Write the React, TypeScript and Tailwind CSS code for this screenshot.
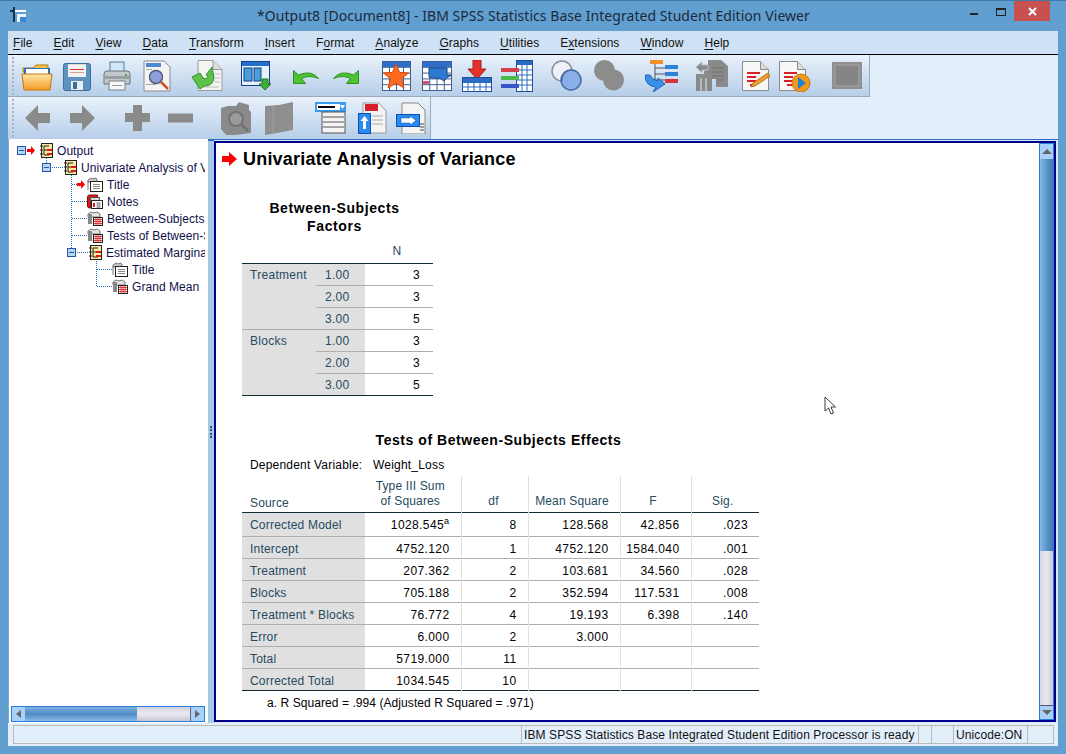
import type { ReactNode } from "react";

type IcProps = { w: number; h?: number; className?: string; children?: ReactNode };

function Ic({ w, h = 32, className, children }: IcProps) {
  return (
    <svg width={w} height={h} viewBox={`0 0 ${w} ${h}`} className={`shrink-0 ${className ?? ""}`}>
      {children}
    </svg>
  );
}

type P = { className?: string };

const Folder = ({ className }: P) => (
  <Ic w={32} className={className}>
    <defs>
      <linearGradient id="fo" x1="0" y1="0" x2="0" y2="1">
        <stop offset="0" stopColor="#ffe7a8" />
        <stop offset="1" stopColor="#f59a22" />
      </linearGradient>
    </defs>
    <path d="M2 8h10l3-3h12v7H2z" fill="#f4c542" stroke="#b57a10" />
    <rect x="3" y="8" width="26" height="6" fill="#2f6fc0" />
    <rect x="5" y="9" width="22" height="6" fill="#fff" />
    <path d="M1 14h30l-2 16H3z" fill="url(#fo)" stroke="#c8740c" />
  </Ic>
);

const Floppy = ({ className }: P) => (
  <Ic w={28} className={className}>
    <rect x="0.5" y="3.5" width="27" height="27" rx="2" fill="#5f93bf" stroke="#3d6f9c" />
    <rect x="5" y="4" width="18" height="13" fill="#f2f2f2" />
    <rect x="5" y="4" width="18" height="1" fill="#d9d9d9" />
    <rect x="7" y="9" width="14" height="1" fill="#d33" />
    <rect x="7" y="12" width="14" height="1" fill="#d8a0a0" />
    <rect x="8" y="21" width="12" height="9" fill="#e8eef5" />
    <rect x="10" y="22" width="4" height="7" fill="#3d6f9c" />
  </Ic>
);

const Printer = ({ className }: P) => (
  <Ic w={28} className={className}>
    <rect x="7" y="2" width="14" height="11" fill="#cfe6fb" stroke="#5d7ea0" />
    <path d="M1 14q0-3 3-3h20q3 0 3 3v10H1z" fill="#c4c8cd" stroke="#6b7178" />
    <rect x="1.5" y="16" width="25" height="3" fill="#9a9fa5" />
    <rect x="22" y="14" width="2" height="2" fill="#3fb24f" />
    <rect x="6" y="21" width="16" height="9" fill="#f6f6f6" stroke="#7b8086" />
    <rect x="9" y="25" width="10" height="1" fill="#999" />
  </Ic>
);

const Preview = ({ className }: P) => (
  <Ic w={29} className={className}>
    <path d="M1 1h20l6 6v24H1z" fill="#f4f4f4" stroke="#8c8c8c" />
    <rect x="3" y="3" width="15" height="4" fill="#4c8ad0" />
    <rect x="3" y="9" width="6" height="1" fill="#aaa" />
    <rect x="3" y="24" width="10" height="1" fill="#aaa" />
    <circle cx="13" cy="17" r="6.5" fill="#8e9fdd" stroke="#555e7a" strokeWidth="1.5" />
    <path d="M18 22l7 7" stroke="#d0522a" strokeWidth="2.5" />
  </Ic>
);

const GreenDoc = ({ className }: P) => (
  <Ic w={32} className={className}>
    <path d="M7 0.5h15l9 9v21H7z" fill="#f4f4f4" stroke="#999" />
    <path d="M22 0.5v9h9" fill="#ddd" stroke="#999" />
    <path d="M24 14h5M24 18h5M24 22h5M12 27h16" stroke="#bbb" />
    <path d="M1 17l8-4 3 5q4 2 5-2l-2-1 6-8 2 11q-1 8-10 8l-4 3z" fill="#5cc24a" stroke="#2e8f2b" />
  </Ic>
);

const WinDown = ({ className }: P) => (
  <Ic w={30} className={className}>
    <rect x="0.5" y="1.5" width="28" height="24" fill="#e8f0f8" stroke="#123e88" />
    <rect x="1" y="2" width="27" height="4" fill="#2470cc" />
    <rect x="3" y="8" width="8" height="13" fill="#48a0d8" stroke="#123e88" />
    <rect x="13" y="8" width="7" height="13" fill="#48a0d8" stroke="#123e88" />
    <path d="M21 19h6v5h3l-6 6-6-6h3z" fill="#3fae3f" stroke="#1f7a1f" />
  </Ic>
);

const Undo = ({ className }: P) => (
  <Ic w={26} className={className}>
    <path d="M0.500 10.500v13h12l-4-5q8-4 17 0q-7-9-20-3.500z" fill="#4dc431" stroke="#2f8f1f" strokeLinejoin="round" />
  </Ic>
);

const Redo = ({ className }: P) => (
  <Ic w={26} className={className}>
    <path d="M25.500 10.500v13h-12l4-5q-8-4-17 0q7-9 20-3.500z" fill="#4dc431" stroke="#2f8f1f" strokeLinejoin="round" />
  </Ic>
);

const Grid = ({ x, y, w, h, cols, rows, color = "#3f5f8f" }: { x: number; y: number; w: number; h: number; cols: number; rows: number; color?: string }) => (
  <g stroke={color} fill="none">
    <rect x={x + 0.5} y={y + 0.5} width={w} height={h} fill="#fff" />
    {Array.from({ length: cols - 1 }, (_, i) => (
      <path key={i} d={`M${x + 0.5 + ((i + 1) * w) / cols} ${y}v${h}`} />
    ))}
    {Array.from({ length: rows - 1 }, (_, i) => (
      <path key={i} d={`M${x} ${y + 0.5 + ((i + 1) * h) / rows}h${w}`} />
    ))}
  </g>
);

const StarTable = ({ className }: P) => (
  <Ic w={29} className={className}>
    <Grid x={0} y={1} w={28} h={29} cols={4} rows={5} />
    <rect x="1" y="2" width="27" height="5" fill="#2e6ec8" />
    <path d="M14 4l3.6 8.4 9 .6-7 5.6 2.4 9.4L14 23l-8 5 2.4-9.4-7-5.6 9-.6z" fill="#ff6a1f" stroke="#d8480c" />
  </Ic>
);

const CaseTable = ({ className }: P) => (
  <Ic w={30} className={className}>
    <Grid x={0} y={1} w={29} h={29} cols={4} rows={5} />
    <rect x="1" y="2" width="28" height="5" fill="#2e6ec8" />
    <path d="M7 8h18v7l5 0q-6 2-8 6-4-4-8-3-4 1-7-1z" fill="#2e7ad0" stroke="#14458c" />
    <rect x="1" y="21" width="6" height="3" fill="#e0506a" />
  </Ic>
);

const InsertCases = ({ className }: P) => (
  <Ic w={30} className={className}>
    <path d="M11 0h8v9h5L15 19 6 9h5z" fill="#e2322a" stroke="#a81d18" />
    <rect x="0.5" y="17.5" width="29" height="14" fill="#fff" stroke="#1d4f9c" />
    <rect x="1" y="18" width="28" height="5" fill="#2a6bc4" />
    <path d="M1 27h28M6 23v9M12 23v9M18 23v9M24 23v9" stroke="#2a6bc4" />
  </Ic>
);

const Vars = ({ className }: P) => (
  <Ic w={32} className={className}>
    <rect x="15.5" y="0.5" width="16" height="31" fill="#fff" stroke="#1d4f9c" />
    <rect x="16" y="1" width="15" height="4" fill="#2a6bc4" />
    <path d="M16 10h15M16 15h15M16 20h15M16 25h15M21 5v26M26 5v26" stroke="#2a6bc4" />
    <rect x="0" y="8" width="18" height="4" fill="#d8404a" />
    <rect x="0" y="16" width="18" height="4" fill="#4cb84a" />
    <rect x="0" y="24" width="18" height="4" fill="#3a54c8" />
  </Ic>
);

const Venn = ({ className }: P) => (
  <Ic w={31} className={className}>
    <circle cx="11" cy="11" r="10" fill="#eef2f8" stroke="#8a8f98" strokeWidth="1.5" />
    <circle cx="20" cy="20" r="10" fill="#8aaee8" stroke="#4a6aa0" strokeWidth="1.5" />
    <path d="M11 21a10 10 0 0 1 9-11" fill="none" stroke="#4a6aa0" />
  </Ic>
);

const VennGray = ({ className }: P) => (
  <Ic w={30} className={className}>
    <circle cx="10.5" cy="10.5" r="10.5" fill="#8c8c8c" />
    <circle cx="19.5" cy="20" r="10.5" fill="#8c8c8c" />
  </Ic>
);

const TreeTool = ({ className }: P) => (
  <Ic w={33} className={className}>
    <rect x="5" y="0" width="13" height="4" fill="#f0902a" />
    <path d="M10 4v20M10 8h10M10 14h10M10 20h10" stroke="#555" fill="none" />
    <rect x="20" y="5" width="13" height="4" fill="#2e82d8" />
    <rect x="20" y="12" width="13" height="4" fill="#2e82d8" />
    <rect x="20" y="19" width="13" height="4" fill="#d8323a" />
    <path d="M0 15q0 11 11 12l-3 5 12-8-7-6 0 3q-6-1-8-6z" fill="#3a92e8" stroke="#1e62b0" />
  </Ic>
);

const GrayPivot = ({ className }: P) => (
  <Ic w={32} className={className}>
    <path d="M12 0h13l7 6v21H20v-8H8v-8l4-2z" fill="#8a8a8a" />
    <path d="M16 8h12M16 12h12M16 16h12M22 20h6" stroke="#6f6f6f" />
    <path d="M0 14h16v17H0z" fill="#8a8a8a" />
    <path d="M5 18v13M10 18v13" stroke="#bdcbd9" strokeWidth="1.5" />
    <path d="M0 7l6-5v3h6v5H6v3z" fill="#8a8a8a" stroke="#b0bdc9" />
  </Ic>
);

const PenDoc = ({ className }: P) => (
  <Ic w={28} className={className}>
    <path d="M0.5 1.5h18l8 8v21h-26z" fill="#f7f7f7" stroke="#8c8c8c" />
    <path d="M18.5 1.5v8h8" fill="#dcdcdc" stroke="#8c8c8c" />
    <path d="M5 13h13M5 17h9M5 21h9M8 25h5" stroke="#d8202a" strokeWidth="2" />
    <path d="M11 23l15-10 2 3-15 10-4 1z" fill="#f0a030" stroke="#b87010" />
  </Ic>
);

const PlayDoc = ({ className }: P) => (
  <Ic w={32} className={className}>
    <path d="M0.5 1.5h18l8 8v21h-26z" fill="#f7f7f7" stroke="#8c8c8c" />
    <path d="M18.5 1.5v8h8" fill="#dcdcdc" stroke="#8c8c8c" />
    <path d="M5 13h13M5 17h9M5 21h9M8 25h5" stroke="#d8202a" strokeWidth="2" />
    <circle cx="22" cy="23" r="9" fill="#f09a1c" stroke="#c87410" />
    <path d="M19 17l8 6-8 6z" fill="#1e7ed8" />
  </Ic>
);

const GrayRect = ({ className }: P) => (
  <Ic w={30} h={27} className={className}>
    <rect width="30" height="27" fill="#8f8f8f" />
    <rect x="3" y="3" width="24" height="21" fill="#858585" stroke="#a5a5a5" />
  </Ic>
);

const BackArrow = ({ className }: P) => (
  <Ic w={25} h={26} className={className}>
    <path d="M0 13L13 0v8h12v10H13v8z" fill="#8a8a8a" />
  </Ic>
);

const FwdArrow = ({ className }: P) => (
  <Ic w={25} h={26} className={className}>
    <path d="M25 13L12 0v8H0v10h12v8z" fill="#8a8a8a" />
  </Ic>
);

const Plus = ({ className }: P) => (
  <Ic w={25} h={26} className={className}>
    <path d="M8 0h9v8h8v9h-8v9H8v-9H0V8h8z" fill="#8a8a8a" />
  </Ic>
);

const Minus = ({ className }: P) => (
  <Ic w={25} h={26} className={className}>
    <rect y="8.5" width="25" height="9" fill="#8a8a8a" />
  </Ic>
);

const GrayBookSearch = ({ className }: P) => (
  <Ic w={30} h={33} className={className}>
    <path d="M0 6l7-2 8 0 3-4 10 3v5l2 2v21l-24 3L0 27z" fill="#8a8a8a" />
    <circle cx="15" cy="17" r="7" fill="#9a9a9a" stroke="#737373" strokeWidth="2" />
    <path d="M20 22l7 7" stroke="#737373" strokeWidth="2.5" />
  </Ic>
);

const GrayBook = ({ className }: P) => (
  <Ic w={28} h={33} className={className}>
    <path d="M0 4l14-1 14-3v28L12 31 0 33z" fill="#8f8f8f" />
    <path d="M8 4v28" stroke="#9f9f9f" />
  </Ic>
);

const ListTool = ({ className }: P) => (
  <Ic w={31} className={className}>
    <rect x="0" y="0" width="31" height="10" fill="#3a9af0" />
    <rect x="2" y="2" width="23" height="6" fill="#fff" />
    <rect x="3" y="4" width="17" height="2" fill="#000" />
    <path d="M25 3h5l-2.5 4z" fill="#fff" />
    <rect x="7" y="10" width="23" height="21" fill="#f4f4f4" stroke="#555" />
    <path d="M8 15h21M8 20h21M8 25h21" stroke="#555" />
  </Ic>
);

const DocUp = ({ className }: P) => (
  <Ic w={29} className={className}>
    <path d="M5 1h16l7 8v22H5z" fill="#f4f4f4" stroke="#999" />
    <rect x="7" y="2" width="13" height="7" fill="#d8202a" />
    <path d="M14 14h11M14 18h11M14 22h11" stroke="#aaa" />
    <rect x="0.5" y="11.5" width="12" height="20" fill="#2a8af0" stroke="#1050b0" />
    <path d="M6.5 14l4 5H8v8H5v-8H2.5z" fill="#fff" />
  </Ic>
);

const DocRight = ({ className }: P) => (
  <Ic w={30} className={className}>
    <path d="M6 1h16l7 7v24H6z" fill="#f4f4f4" stroke="#888" />
    <path d="M24 22h4M24 25h4M24 28h4" stroke="#444" />
    <rect x="0.5" y="12.5" width="23" height="12" fill="#2a8af0" stroke="#1050b0" />
    <path d="M5 16h9v-2l6 4.500-6 4.500v-2H5z" fill="#fff" stroke="#1050b0" strokeWidth="0.5" />
  </Ic>
);

const TreeBox = ({ className }: P) => (
  <Ic w={9} h={9} className={className}>
    <rect x="0.5" y="0.500" width="8" height="8" fill="#b8d4f0" stroke="#1f58a8" />
    <path d="M2 4.500h5" stroke="#1f58a8" />
  </Ic>
);

const RedArrow = ({ className }: P) => (
  <Ic w={8} h={9} className={className}>
    <path d="M0 3h4V0l4 4.500L4 9V6H0z" fill="#f00" />
  </Ic>
);

const HeadIcon = ({ className }: P) => (
  <Ic w={13} h={15} className={className}>
    <rect x="1.500" y="0.500" width="11" height="14" fill="#f8e8a0" stroke="#222" />
    <path d="M0 3h3M0 7h3M0 11h3" stroke="#222" />
    <path d="M4 3h5M4 3v9M4 7h4M4 12h5" stroke="#222" />
    <rect x="7" y="6" width="5" height="2" fill="#e01818" />
    <rect x="7" y="10" width="5" height="2" fill="#e01818" />
  </Ic>
);

const TextBook = ({ className }: P) => (
  <Ic w={16} h={15} className={className}>
    <path d="M1 3l3-2 2 1 2-1 2 1v3H1z" fill="#c8c8c8" stroke="#777" />
    <path d="M1 4v9" stroke="#777" />
    <rect x="3.500" y="4.500" width="12" height="10" fill="#fff" stroke="#222" />
    <path d="M6 7.500h7M6 9.500h7M6 11.500h7" stroke="#888" />
  </Ic>
);

const TableBook = ({ className }: P) => (
  <Ic w={16} h={15} className={className}>
    <path d="M1 3l3-2 3 1 3-1 3 2v3H1z" fill="#e4e4e4" stroke="#777" />
    <rect x="1" y="3" width="4" height="10" fill="#888" />
    <rect x="6.500" y="6.500" width="9" height="8" fill="#fff" stroke="#222" />
    <path d="M7 8.500h8M7 10.500h8M7 12.500h8M9 7v7M11 7v7M13 7v7" stroke="#d81818" strokeWidth="0.8" />
  </Ic>
);

const NotesBook = ({ className }: P) => (
  <Ic w={16} h={15} className={className}>
    <path d="M0.500 3q0-2 2-2h8v5h-7v8h-1q-2 0-2-2z" fill="#d81818" stroke="#801010" />
    <rect x="3.500" y="3.500" width="9" height="4" fill="#d8d8d8" stroke="#555" />
    <rect x="4.500" y="6.500" width="11" height="8" fill="#fff" stroke="#222" />
    <rect x="6" y="9" width="2" height="4" fill="#d81818" />
    <path d="M9.500 9h4M9.500 11h4M9.500 13h4" stroke="#555" />
  </Ic>
);

const MENU: [string, string, string][] = [
  ["", "F", "ile"],
  ["", "E", "dit"],
  ["", "V", "iew"],
  ["", "D", "ata"],
  ["", "T", "ransform"],
  ["", "I", "nsert"],
  ["F", "o", "rmat"],
  ["", "A", "nalyze"],
  ["", "G", "raphs"],
  ["", "U", "tilities"],
  ["E", "x", "tensions"],
  ["", "W", "indow"],
  ["", "H", "elp"],
];

const FACTORS = [
  { name: "Treatment", rows: [["1.00", "3"], ["2.00", "3"], ["3.00", "5"]] },
  { name: "Blocks", rows: [["1.00", "3"], ["2.00", "3"], ["3.00", "5"]] },
];

const EFFECTS = [
  ["Corrected Model", "1028.545", "8", "128.568", "42.856", ".023"],
  ["Intercept", "4752.120", "1", "4752.120", "1584.040", ".001"],
  ["Treatment", "207.362", "2", "103.681", "34.560", ".028"],
  ["Blocks", "705.188", "2", "352.594", "117.531", ".008"],
  ["Treatment * Blocks", "76.772", "4", "19.193", "6.398", ".140"],
  ["Error", "6.000", "2", "3.000", "", ""],
  ["Total", "5719.000", "11", "", "", ""],
  ["Corrected Total", "1034.545", "10", "", "", ""],
];

function TreeRow({ className, children, label }: { className: string; children: ReactNode; label: string }) {
  return (
    <div className={`flex h-[17px] items-center whitespace-nowrap text-[12px] text-[#10104a] ${className}`}>
      {children}
      <span className="ml-[4px] tracking-[0.05px]">{label}</span>
    </div>
  );
}

function TreePane() {
  return (
    <div className="relative flex w-[200px] shrink-0 flex-col overflow-hidden border-l border-[#7fa9d0] bg-white">
      <svg width="198" height="170" className="absolute left-0 top-0" fill="none" stroke="#2a6cc0" strokeDasharray="1 1">
        <path d="M37.500 17v7M41 28.500h14M62.500 34v76M63 45.500h6M63 62.500h15M63 79.500h15M63 96.500h15M66 113.500h14M87.500 120v28M88 130.500h15M88 147.500h15" />
      </svg>
      <div className="relative w-[196px] flex-1 overflow-hidden pt-[3px]">
        <TreeRow className="pl-[8px]" label="Output">
          <TreeBox />
          <RedArrow className="ml-[1px]" />
          <HeadIcon className="ml-[5px]" />
        </TreeRow>
        <TreeRow className="pl-[33px]" label="Univariate Analysis of Variance">
          <TreeBox />
          <HeadIcon className="ml-[13px]" />
        </TreeRow>
        <TreeRow className="pl-[68px]" label="Title">
          <RedArrow />
          <TextBook className="ml-[2px]" />
        </TreeRow>
        <TreeRow className="pl-[78px]" label="Notes">
          <NotesBook />
        </TreeRow>
        <TreeRow className="pl-[78px]" label="Between-Subjects Factors">
          <TableBook />
        </TreeRow>
        <TreeRow className="pl-[78px]" label="Tests of Between-Subjects Effects">
          <TableBook />
        </TreeRow>
        <TreeRow className="pl-[58px]" label="Estimated Marginal Means">
          <TreeBox />
          <HeadIcon className="ml-[13px]" />
        </TreeRow>
        <TreeRow className="pl-[103px]" label="Title">
          <TextBook />
        </TreeRow>
        <TreeRow className="pl-[103px]" label="Grand Mean">
          <TableBook />
        </TreeRow>
      </div>
      <div className="mx-[2px] mb-[1px] flex h-[16px] w-[194px] border border-[#2a80d8]">
        <div className="flex w-[13px] items-center justify-center bg-[#a8d0f8]">
          <div className="h-0 w-0 border-y-[4px] border-r-[5px] border-y-transparent border-r-[#666]" />
        </div>
        <div className="w-[112px] bg-gradient-to-b from-[#7fb0e0] via-[#4f8cc4] to-[#8ab8e6]" />
        <div className="flex-1 bg-gradient-to-b from-[#d4d2e0] via-[#ebe9f0] to-[#c8c6d4]" />
        <div className="flex w-[14px] items-center justify-center border-l border-[#668] bg-[#a8d0f8]">
          <div className="h-0 w-0 border-y-[4px] border-l-[5px] border-y-transparent border-l-[#666]" />
        </div>
      </div>
    </div>
  );
}

function FactorsTable() {
  return (
    <table className="w-[191px] table-fixed border-collapse border-b border-[#152935] text-[12px] tracking-[0.3px]">
      <colgroup>
        <col className="w-[74px]" />
        <col className="w-[49px]" />
        <col className="w-[68px]" />
      </colgroup>
      <thead>
        <tr className="h-[22px] border-b border-[#152935] text-[#264a60]">
          <th colSpan={2} />
          <th className="pb-[1px] pr-[4px] text-center font-normal">N</th>
        </tr>
      </thead>
      {FACTORS.map((g, gi) => (
        <tbody key={g.name} className={gi > 0 ? "border-t border-[#aeaeae]" : ""}>
          {g.rows.map((r, i) => (
            <tr key={i} className={`h-[22px] ${i > 0 ? "border-t border-[#aeaeae]" : ""}`}>
              {i === 0 && (
                <td rowSpan={3} className="bg-[#e0e0e0] pl-[8px] pt-[2px] align-top text-[#264a60]">
                  {g.name}
                </td>
              )}
              <td className="bg-[#e0e0e0] pl-[9px] pt-[1px] text-[#264a60]">{r[0]}</td>
              <td className="pr-[13px] pt-[1px] text-right text-[#010205]">{r[1]}</td>
            </tr>
          ))}
        </tbody>
      ))}
    </table>
  );
}

function EffectsTable() {
  return (
    <table className="w-[517px] table-fixed border-collapse border-b border-[#152935] text-[12px]">
      <colgroup>
        <col className="w-[123px]" />
        <col className="w-[96px]" />
        <col className="w-[67px]" />
        <col className="w-[92px]" />
        <col className="w-[71px]" />
        <col className="w-[68px]" />
      </colgroup>
      <thead>
        <tr className="h-[37px] border-b border-[#152935] tracking-[0.15px] text-[#264a60] [&>th]:align-bottom [&>th]:font-normal [&>th]:leading-[15px]">
          <th className="pb-[1px] pl-[8px] text-left">Source</th>
          <th className="pb-[3px] pr-[5px] text-center">
            Type III Sum
            <br />
            of Squares
          </th>
          <th className="border-l border-[#e0e0e0] pb-[3px] pr-[2px] text-center">df</th>
          <th className="border-l border-[#e0e0e0] pb-[3px] pr-[4px] text-center">Mean Square</th>
          <th className="border-l border-[#e0e0e0] pb-[3px] pr-[5px] text-center">F</th>
          <th className="border-l border-[#e0e0e0] pb-[3px] pr-[5px] text-center">Sig.</th>
        </tr>
      </thead>
      <tbody>
        {EFFECTS.map((r, i) => (
          <tr key={r[0]} className={i === 0 ? "h-[24px]" : "h-[22px] border-t border-[#aeaeae]"}>
            <td className={`whitespace-nowrap bg-[#e0e0e0] pl-[8px] tracking-[0.2px] text-[#264a60] ${i > 0 ? "pt-[2px]" : ""}`}>{r[0]}</td>
            {r.slice(1).map((v, j) => (
              <td key={j} className={`pr-[11px] text-right tracking-[0.4px] text-[#010205] ${i > 0 ? "pt-[2px]" : ""} ${j > 0 ? "border-l border-[#e0e0e0]" : ""}`}>
                {v}
                {i === 0 && j === 0 && <sup className="text-[9px]">a</sup>}
              </td>
            ))}
          </tr>
        ))}
      </tbody>
    </table>
  );
}

function ContentPane() {
  return (
    <div className="relative flex min-w-0 flex-1 border-2 border-[#00008b] bg-white">
      <div className="min-w-0 flex-1 text-[#010205]">
        <div className="mt-[6px] flex h-[20px] items-center pl-[6px]">
          <svg width="15" height="14" viewBox="0 0 15 14">
            <path d="M0 4h7V0l8 7-8 7v-4H0z" fill="#f00" />
          </svg>
          <h1 className="ml-[6px] text-[18px] font-bold tracking-[0.2px] text-black">Univariate Analysis of Variance</h1>
        </div>
        <div className="mt-[30px] pl-[26px] text-center text-[14px] font-bold leading-[18px] tracking-[0.6px] text-black">
          <div className="w-[185px]">
            Between-Subjects
            <br />
            Factors
          </div>
        </div>
        <div className="mt-[6px] pl-[26px]">
          <FactorsTable />
        </div>
        <div className="mt-[35px] w-[565px] text-center text-[14px] font-bold leading-[18px] tracking-[0.55px] text-black">
          Tests of Between-Subjects Effects
        </div>
        <div className="mt-[7px] flex h-[18px] items-center pl-[34px] text-[12px] tracking-[0.2px]">
          <span className="w-[123px]">Dependent Variable:</span>
          <span>Weight_Loss</span>
        </div>
        <div className="mt-[2px] pl-[26px]">
          <EffectsTable />
        </div>
        <div className="mt-[4px] pl-[51px] text-[12px] leading-[16px] tracking-[0.07px]">
          a. R Squared = .994 (Adjusted R Squared = .971)
        </div>
      </div>
      <div className="flex w-[15px] shrink-0 flex-col border border-[#2a80d8]">
        <div className="flex h-[15px] items-center justify-center bg-[#a8d0f8]">
          <div className="h-0 w-0 border-x-[5px] border-b-[5px] border-x-transparent border-b-[#666]" />
        </div>
        <div className="h-[392px] bg-gradient-to-r from-[#8ab8e6] via-[#5a96cc] to-[#3f78b0]" />
        <div className="flex-1 bg-gradient-to-r from-[#d8d6e2] via-[#ebe9f0] to-[#c8c6d4]" />
        <div className="flex h-[14px] items-center justify-center border-t border-[#557] bg-[#a8d0f8]">
          <div className="h-0 w-0 border-x-[5px] border-t-[5px] border-x-transparent border-t-[#666]" />
        </div>
      </div>
      <svg width="13" height="20" viewBox="0 0 13 20" className="absolute left-[608px] top-[253px]">
        <path d="M1 1v14l3.500-3 2.500 6 2.500-1-2.500-6h4.500z" fill="#fff" stroke="#222" strokeWidth="0.9" />
      </svg>
    </div>
  );
}

export default function App() {
  return (
    <div className="flex h-[754px] w-[1066px] flex-col overflow-hidden border-t border-[#3f7aa8] bg-[#619fd1] font-['Liberation_Sans',sans-serif]">
      <div className="flex h-[30px] shrink-0 items-start">
        <svg width="17" height="16" viewBox="0 0 17 16" className="ml-[10px] mt-[6px]">
          <path d="M4 0v15M0 4h9" stroke="#12324f" strokeWidth="2" />
          <path d="M5 4h11" stroke="#fff" strokeWidth="2" />
          <rect x="7" y="7" width="9" height="8" fill="#e8f4ff" />
          <rect x="10" y="10" width="6" height="5" fill="#3a8ad0" />
        </svg>
        <div className="ml-[230px] mt-[5px] w-[552px] whitespace-nowrap text-center font-['Noto_Sans',sans-serif] text-[14px] leading-[20px] tracking-[0.05px] text-[#1c2a38]">
          *Output8 [Document8] - IBM SPSS Statistics Base Integrated Student Edition Viewer
        </div>
        <div className="ml-[161px] mt-[12px] h-[2px] w-[8px] bg-[#222]" />
        <div className="ml-[18px] mt-[7px] h-[8px] w-[10px] border border-t-2 border-[#222]" />
        <div className="ml-[8px] flex h-[20px] w-[36px] items-center justify-center bg-[#c75050]">
          <svg width="9" height="9" viewBox="0 0 9 9">
            <path d="M1 1l7 7M8 1L1 8" stroke="#fff" strokeWidth="2" />
          </svg>
        </div>
      </div>
      <div className="mx-[8px] flex min-h-0 flex-1 flex-col">
        <div className="flex h-[24px] shrink-0 items-center gap-[21px] border-b-[1px] border-black bg-[#cfe1f4] pl-[5px] text-[12px] tracking-[0.05px] text-[#111]">
          {MENU.map(([pre, key, rest]) => (
            <span key={pre + key + rest}>
              {pre}
              <span className="underline underline-offset-2">{key}</span>
              {rest}
            </span>
          ))}
        </div>
        <div className="flex h-[42px] shrink-0 bg-[#e3eefb]">
          <div className="flex w-[862px] items-center border-b border-r border-[#9aa8b8] bg-gradient-to-b from-[#eaf2fc] to-[#b6cee8] pl-[4px]">
            <div className="h-[38px] w-[2px] border-l-2 border-dotted border-[#aab5c2]" />
            <Folder className="ml-[7px]" />
            <Floppy className="ml-[10px]" />
            <Printer className="ml-[12px]" />
            <Preview className="ml-[12px]" />
            <GreenDoc className="ml-[19px]" />
            <WinDown className="ml-[18px]" />
            <Undo className="ml-[22px]" />
            <Redo className="ml-[14px]" />
            <StarTable className="ml-[23px]" />
            <CaseTable className="ml-[11px]" />
            <InsertCases className="ml-[10px]" />
            <Vars className="ml-[9px]" />
            <Venn className="ml-[18px]" />
            <VennGray className="ml-[12px]" />
            <TreeTool className="ml-[21px]" />
            <GrayPivot className="ml-[18px]" />
            <PenDoc className="ml-[14px]" />
            <PlayDoc className="ml-[9px]" />
            <GrayRect className="ml-[21px]" />
          </div>
        </div>
        <div className="flex h-[42px] shrink-0 bg-[#e3eefb]">
          <div className="flex w-[423px] items-center border-r border-[#9aa8b8] bg-gradient-to-b from-[#eaf2fc] to-[#b6cee8] pl-[4px]">
            <div className="h-[38px] w-[2px] border-l-2 border-dotted border-[#aab5c2]" />
            <BackArrow className="ml-[11px]" />
            <FwdArrow className="ml-[20px]" />
            <Plus className="ml-[30px]" />
            <Minus className="ml-[18px]" />
            <GrayBookSearch className="ml-[28px]" />
            <GrayBook className="ml-[14px]" />
            <ListTool className="ml-[22px]" />
            <DocUp className="ml-[12px]" />
            <DocRight className="ml-[9px]" />
          </div>
        </div>
        <div className="flex min-h-0 flex-1">
          <TreePane />
          <div className="flex w-[6px] shrink-0 items-center justify-center border-t-2 border-[#2a6cc0] bg-[#a9c9e8]">
            <div className="h-[12px] w-[2px] border-l-2 border-dotted border-[#28506f]" />
          </div>
          <div className="flex min-w-0 flex-1 border-t border-[#2a6cc0] bg-[#dbe8f6] pb-[1px] pr-[2px] pt-[1px]">
            <ContentPane />
          </div>
        </div>
        <div className="flex h-[23px] shrink-0 items-center bg-[#e3eefb] py-[2px] pl-[5px] pr-[4px] text-[12px] tracking-[0.1px] text-[#111]">
          <div className="h-full w-[508px] border border-r-0 border-[#b9b9b9]" />
          <div className="flex h-full w-[397px] items-center border border-r-0 border-[#b9b9b9] pl-[2px]">
            IBM SPSS Statistics Base Integrated Student Edition Processor is ready
          </div>
          <div className="h-full w-[13px] border border-r-0 border-[#b9b9b9]" />
          <div className="h-full w-[22px] border border-r-0 border-[#b9b9b9]" />
          <div className="flex h-full w-[74px] items-center border border-r-0 border-[#b9b9b9] pl-[2px]">Unicode:ON</div>
          <div className="h-full flex-1 border border-[#b9b9b9]" />
        </div>
      </div>
      <div className="h-[8px] shrink-0" />
    </div>
  );
}
